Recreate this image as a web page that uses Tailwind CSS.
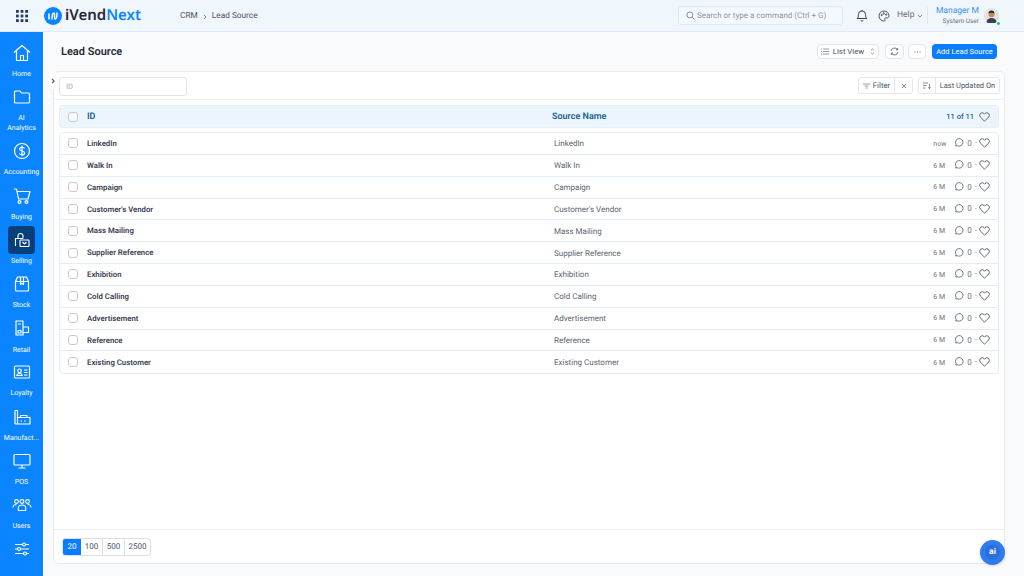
<!DOCTYPE html>
<html lang="en">
  <head>
    <meta charset="UTF-8" />
    <title>Lead Source</title>
    <script src="https://cdn.jsdelivr.net/npm/@tailwindcss/browser@4"></script>
  </head>
  <body class="w-[1024px] h-[576px] overflow-hidden bg-[#f8fafc] font-['Roboto',sans-serif] [text-rendering:geometricPrecision] text-[#4b5563]">
    <!-- top bar -->
    <header class="h-[32px] flex items-center bg-[#eff6fc] border-b border-[#dbeafe]">
      <div class="w-[678px] shrink-0 flex items-center">
        <div class="w-[43px] flex justify-center">
          <svg width="12" height="12" viewBox="0 0 13 13" fill="#1e3a5f"><rect x="0" y="0" width="3" height="3"/><rect x="5" y="0" width="3" height="3"/><rect x="10" y="0" width="3" height="3"/><rect x="0" y="5" width="3" height="3"/><rect x="5" y="5" width="3" height="3"/><rect x="10" y="5" width="3" height="3"/><rect x="0" y="10" width="3" height="3"/><rect x="5" y="10" width="3" height="3"/><rect x="10" y="10" width="3" height="3"/></svg>
        </div>
        <svg width="18" height="18" viewBox="0 0 18 18" class="ml-px"><circle cx="9" cy="9" r="9" fill="#0a84ff"/><path d="M5 7v5M8 12c0-4 1-6 2-6s0 6 1 6 2-2 2-6" fill="none" stroke="#fff" stroke-width="1.500" stroke-linecap="round"/></svg>
        <div class="ml-[3px] w-[76px] font-['Noto_Sans',sans-serif] text-[15px] font-semibold leading-none text-[#1f2937]">iVend<span class="text-[#0a84ff]">Next</span></div>
        <div class="ml-[39px] pt-[2px] flex items-center text-[8.300px] text-[#4b5563]">
          <span>CRM</span>
          <svg width="12" height="10" viewBox="0 0 12 10" fill="none" stroke="#6b7280" stroke-width="0.9" class="mx-[1px]"><path d="M5 3l2 2-2 2"/></svg>
          <span>Lead Source</span>
        </div>
      </div>
      <div class="w-[165px] h-[19px] flex items-center gap-[2px] px-[7px] rounded-[3px] bg-[#f5f9fd] border border-[#dbeafe] text-[8px] text-[#8b95a3]">
        <svg width="9" height="9" viewBox="0 0 10 10" fill="none" stroke="#6b7280" stroke-width="0.9"><circle cx="4.300" cy="4.300" r="3.300"/><path d="M6.800 6.800L9.500 9.500"/></svg>
        <span class="pt-[1px]">Search or type a command (Ctrl + G)</span>
      </div>
      <svg width="12" height="13" viewBox="0 0 12 13" fill="none" stroke="#374151" class="ml-[13px]"><path d="M1.200 9.500c1-1 1.200-2 1.200-4a3.600 3.600 0 0 1 7.200 0c0 2 .2 3 1.200 4zM4.800 11.300a1.300 1.300 0 0 0 2.400 0M6 1v.8"/></svg>
      <svg width="12" height="12" viewBox="0 0 12 12" fill="none" stroke="#4b5563" class="ml-[10px]"><path d="M6 1a5 5 0 1 0 0 10c1.200 0 1.300-.9.9-1.500-.5-.8 0-1.600.9-1.600h1.400C10.300 7.900 11 7 11 6c0-2.800-2.200-5-5-5z"/><circle cx="3.700" cy="5" r=".6" fill="#4b5563"/><circle cx="5.800" cy="3.400" r=".6" fill="#4b5563"/><circle cx="8.200" cy="4.600" r=".6" fill="#4b5563"/></svg>
      <div class="ml-[7px] flex items-center gap-[3px] text-[8.500px] text-[#6b7280]">
        <span>Help</span>
        <svg width="6" height="4" viewBox="0 0 6 4" fill="none" stroke="#6b7280" stroke-width="0.8"><path d="M1 1l2 2 2-2"/></svg>
      </div>
      <div class="ml-[4px] w-px h-[17px] bg-[#dfe7ef]"></div>
      <div class="ml-auto pt-[1px] flex flex-col items-end">
        <span class="text-[8.500px] leading-[11px] text-[#3b93f5]">Manager M</span>
        <span class="text-[6.500px] leading-[9px] text-[#6b7280]">System User</span>
      </div>
      <div class="relative ml-[5px] mr-[25px] w-[15px] h-[15px]">
        <svg width="15" height="15" viewBox="0 0 15 15"><circle cx="7.500" cy="7.500" r="7.500" fill="#e5e2dc"/><path d="M2.500 14c.5-3 2.500-4 5-4s4.500 1 5 4a7.500 7.500 0 0 1-10 0z" fill="#374151"/><circle cx="7.500" cy="6.300" r="3" fill="#b98a6c"/><path d="M4.500 5.500c0-2 1.500-3 3-3s3 1 3 3c-1-1-5-1-6 0z" fill="#2b211c"/></svg>
        <span class="absolute right-[-2px] bottom-[-3px] w-[5px] h-[5px] rounded-full bg-[#22c55e] border-[0.5px] border-white"></span>
      </div>
    </header>

    <div class="flex h-[544px]">
      <!-- side nav -->
      <nav class="w-[43px] shrink-0 bg-[#0a84ff] text-white flex flex-col items-center pt-[11px] text-[7px] leading-[10px]">
        <a class="h-[44.200px] w-full flex flex-col items-center">
          <svg class="h-[20px] w-[20px] shrink-0" viewBox="0 0 20 20" fill="none" stroke="#fff" stroke-width="1.200" stroke-linejoin="round"><path d="M2 9.500L10 2.500l8 7M4.500 8v9.500h11V8M8.500 17.500v-5h3v5"/></svg>
          <span class="mt-[6px]">Home</span>
        </a>
        <a class="h-[54.200px] w-full flex flex-col items-center">
          <svg class="h-[20px] w-[20px] shrink-0" viewBox="0 0 20 20" fill="none" stroke="#fff" stroke-width="1.200" stroke-linejoin="round"><path d="M3.500 16h13a1 1 0 0 0 1-1V7a1 1 0 0 0-1-1H9.500L8 4H3.500a1 1 0 0 0-1 1v10a1 1 0 0 0 1 1z"/></svg>
          <span class="mt-[6px] text-center">AI<br />Analytics</span>
        </a>
        <a class="h-[44.200px] w-full flex flex-col items-center">
          <svg class="h-[20px] w-[20px] shrink-0" viewBox="0 0 20 20" fill="none" stroke="#fff" stroke-width="1.200"><circle cx="10" cy="10" r="7.500"/><path d="M12.500 7.500c-.5-1-1.500-1.300-2.500-1.300-1.300 0-2.400.7-2.400 1.900 0 2.600 5 1.200 5 3.800 0 1.200-1.200 1.900-2.600 1.900-1.100 0-2.200-.5-2.600-1.400M10 4.800v10.400"/></svg>
          <span class="mt-[6px]">Accounting</span>
        </a>
        <a class="h-[44.200px] w-full flex flex-col items-center">
          <svg class="h-[20px] w-[20px] shrink-0" viewBox="0 0 20 20" fill="none" stroke="#fff" stroke-width="1.200" stroke-linejoin="round"><path d="M2 3h2.500l2 10h9.500l2-7.500H5"/><circle cx="7.500" cy="16" r="1.400"/><circle cx="14.500" cy="16" r="1.400"/></svg>
          <span class="mt-[6px]">Buying</span>
        </a>
        <a class="relative h-[44.200px] w-full flex flex-col items-center">
          <span class="absolute top-[-4px] left-[8px] w-[27px] h-[28px] rounded-[4px] bg-[#063f7a]"></span>
          <svg class="relative h-[20px] w-[20px] shrink-0" viewBox="0 0 20 20" fill="none" stroke="#fff" stroke-width="1.100" stroke-linejoin="round"><path d="M3.500 16V8.500h7.500M6 8.500V6a2.500 2.500 0 0 1 5 0v2.500"/><rect x="8" y="10" width="9" height="6.500" rx=".6"/><path d="M10.500 12l2 2 2-2"/></svg>
          <span class="relative mt-[6px]">Selling</span>
        </a>
        <a class="h-[44.200px] w-full flex flex-col items-center">
          <svg class="h-[20px] w-[20px] shrink-0" viewBox="0 0 20 20" fill="none" stroke="#fff" stroke-width="1.200" stroke-linejoin="round"><path d="M3.500 7.500L5.500 3h9l2 4.500V16a1 1 0 0 1-1 1h-11a1 1 0 0 1-1-1zM3.500 7.500h13M8.500 3v7.500L10 9.500l1.500 1V3"/></svg>
          <span class="mt-[6px]">Stock</span>
        </a>
        <a class="h-[44.200px] w-full flex flex-col items-center">
          <svg class="h-[20px] w-[20px] shrink-0" viewBox="0 0 20 20" fill="none" stroke="#fff" stroke-width="1.200" stroke-linejoin="round"><path d="M4 17V3h7v14zM11 9h5.500v5.500H11"/><path d="M6 6h3M6 12.500h3v2.500H6z" /></svg>
          <span class="mt-[7px]">Retail</span>
        </a>
        <a class="h-[44.200px] w-full flex flex-col items-center">
          <svg class="h-[20px] w-[20px] shrink-0" viewBox="0 0 20 20" fill="none" stroke="#fff" stroke-width="1.200" stroke-linejoin="round"><rect x="2.500" y="4" width="15" height="12" rx="1"/><circle cx="7.500" cy="8.800" r="1.800"/><path d="M4.800 13.500c.2-1.500 1.300-2 2.700-2s2.500.5 2.700 2zM12 8h3.500M12 10.500h3.500M12 13h3.500"/></svg>
          <span class="mt-[6px]">Loyalty</span>
        </a>
        <a class="h-[44.200px] w-full flex flex-col items-center">
          <svg class="h-[20px] w-[20px] shrink-0" viewBox="0 0 20 20" fill="none" stroke="#fff" stroke-width="1.200" stroke-linejoin="round"><path d="M3 17V3.500h2.500V17M3 17h15v-6.500H5.500M8.500 10.500V8.500h6.500v2M8.500 14h1.500M12 14h1.500"/></svg>
          <span class="mt-[6px]">Manufact...</span>
        </a>
        <a class="h-[44.200px] w-full flex flex-col items-center">
          <svg class="h-[20px] w-[20px] shrink-0" viewBox="0 0 20 20" fill="none" stroke="#fff" stroke-width="1.200" stroke-linejoin="round"><rect x="2" y="3.500" width="16" height="10.500" rx="1"/><path d="M10 14v3M6.500 17h7"/></svg>
          <span class="mt-[6px]">POS</span>
        </a>
        <a class="h-[44.200px] w-full flex flex-col items-center">
          <svg class="h-[20px] w-[20px] shrink-0" viewBox="0 0 20 20" fill="none" stroke="#fff" stroke-width="1.100" stroke-linejoin="round"><circle cx="4.500" cy="6.500" r="1.900"/><circle cx="10" cy="6.500" r="1.900"/><circle cx="15.500" cy="6.500" r="1.900"/><path d="M1 12.500c0-2 1.500-3 3.500-3M19 12.500c0-2-1.500-3-3.500-3M6.300 15.500v-2.500c0-1.700 1.700-3 3.700-3s3.700 1.300 3.700 3v2.500z"/></svg>
          <span class="mt-[6px]">Users</span>
        </a>
        <a class="w-full flex flex-col items-center">
          <svg class="h-[20px] w-[20px] shrink-0" viewBox="0 0 20 20" fill="none" stroke="#fff" stroke-width="1.200"><path d="M3 5.500h14M3 10h14M3 14.500h14"/><circle cx="12" cy="5.500" r="1.500" fill="#0a84ff"/><circle cx="7" cy="10" r="1.500" fill="#0a84ff"/><circle cx="13" cy="14.500" r="1.500" fill="#0a84ff"/></svg>
        </a>
      </nav>

      <main class="flex-1 min-w-0 pl-[10px] pr-[19px] relative">
        <!-- page head -->
        <div class="h-[39px] flex items-center pl-[8px] pr-[8px]">
          <h1 class="pt-[2px] text-[11px] font-semibold text-[#1f2937]">Lead Source</h1>
          <div class="ml-auto flex items-center text-[7.800px] text-[#4b5563]">
            <button class="h-[15px] w-[62px] flex items-center justify-center gap-[4px] rounded-[4px] bg-white border border-[#e2e5e9]">
              <svg width="8" height="7" viewBox="0 0 8 7" fill="none" stroke="#6b7280" stroke-width="0.7"><path d="M0 1h1M2 1h6M0 3.500h1M2 3.500h6M0 6h1M2 6h6"/></svg>
              <span class="pt-[1px]">List View</span>
              <svg width="5" height="7" viewBox="0 0 5 7" fill="none" stroke="#6b7280" stroke-width="0.7" class="ml-[2px]"><path d="M1 2.200l1.500-1.200L4 2.200M1 4.800L2.500 6 4 4.800"/></svg>
            </button>
            <button class="h-[15px] w-[19px] ml-[6px] flex items-center justify-center rounded-[4px] bg-white border border-[#e2e5e9]">
              <svg width="9" height="9" viewBox="0 0 9 9" fill="none" stroke="#4b5563" stroke-width="0.8"><path d="M1 3.800a3.600 3.600 0 0 1 6.400-1.300M8 5.200a3.600 3.600 0 0 1-6.400 1.300M7.700 1v1.800H5.900M1.300 8V6.200h1.800"/></svg>
            </button>
            <button class="h-[15px] w-[18px] ml-[4px] flex items-center justify-center rounded-[4px] bg-white border border-[#e2e5e9]">
              <svg width="7" height="2" viewBox="0 0 7 2" fill="#4b5563"><circle cx="1" cy="1" r=".6"/><circle cx="3.500" cy="1" r=".6"/><circle cx="6" cy="1" r=".6"/></svg>
            </button>
            <button class="h-[15px] w-[65px] ml-[6px] pt-[1px] rounded-[4px] bg-[#0a7cff] text-[7.500px] text-white">Add Lead Source</button>
          </div>
        </div>

        <!-- list card -->
        <section class="relative h-[493px] bg-white border border-[#e7eaee] rounded-[6px] flex flex-col">
          <span class="absolute left-[-4px] top-0 w-[7px] h-[17px] flex items-center justify-center bg-white rounded-[2px]">
            <svg width="5" height="6" viewBox="0 0 5 6" fill="none" stroke="#4b5563" stroke-width="1.100"><path d="M1 .8l2.200 2.200L1 5.200"/></svg>
          </span>
          <div class="h-[28px] flex items-center pl-[5px] pr-[4px] border-b border-[#eef0f3]">
            <div class="mt-[2px] w-[128px] h-[19px] flex items-center px-[6px] rounded-[3px] border border-[#e2e4e8] text-[7.500px] text-[#a3a9b2]">ID</div>
            <div class="ml-auto flex items-center text-[7.800px] text-[#4b5563]">
              <div class="flex h-[17px] rounded-[3px] border border-[#e5e7eb]">
                <span class="w-[36px] flex items-center justify-center gap-[3px] border-r border-[#e5e7eb]">
                  <svg width="7" height="6" viewBox="0 0 7 6" fill="none" stroke="#6b7280" stroke-width="0.7"><path d="M0 1h7M1.500 3h4M2.500 5h2"/></svg>
                  Filter
                </span>
                <span class="w-[17px] flex items-center justify-center">
                  <svg width="6" height="6" viewBox="0 0 6 6" fill="none" stroke="#4b5563" stroke-width="0.7"><path d="M1 1l4 4M5 1L1 5"/></svg>
                </span>
              </div>
              <div class="ml-[5px] flex h-[17px] rounded-[3px] border border-[#e5e7eb]">
                <span class="w-[17px] flex items-center justify-center border-r border-[#e5e7eb]">
                  <svg width="8" height="7" viewBox="0 0 8 7" fill="none" stroke="#4b5563" stroke-width="0.7"><path d="M0 1h5M0 3.500h3.500M0 6h2.500M6.500 2v4.500M5.200 5.300l1.300 1.300 1.300-1.300"/></svg>
                </span>
                <span class="w-[63px] flex items-center justify-center whitespace-nowrap text-[7.500px]">Last Updated On</span>
              </div>
            </div>
          </div>

          <div class="mx-[5px] mt-[5px] h-[23px] shrink-0 flex items-center rounded-[3px] bg-[#edf5fc] border border-[#e3eff9] text-[9px] font-semibold text-[#15639f]">
            <span class="ml-[8px] w-[10px] h-[10px] rounded-[3px] border-[1.500px] border-[#c6c9ce] bg-[#f8fafc]"></span>
            <span class="ml-[9px] w-[465px] pt-[2px]">ID</span>
            <span class="pt-[2px]">Source Name</span>
            <span class="ml-auto pt-[1px] text-[7.500px] font-medium">11 of 11</span>
            <svg width="11" height="10" viewBox="0 0 10 9" fill="none" stroke="#4b5563" stroke-width="0.8" class="ml-[5px] mr-[8px]"><path d="M5 8.300L1.200 4.500a2.300 2.300 0 0 1 3.300-3.200l.5.500.5-.5a2.300 2.300 0 0 1 3.300 3.200z"/></svg>
          </div>

          <div id="rows" class="mx-[5px] mt-[4px] rounded-[4px] border border-[#dfeefb] divide-y divide-[#dfeefb]"></div>

          <div class="mt-auto h-[34px] flex items-center pl-[8px] border-t border-[#eceef1]">
            <div class="flex h-[18px] rounded-[3px] border border-[#dcdfe3] text-[8px] text-[#4b5563]">
              <span class="w-[18px] flex items-center justify-center rounded-l-[2px] bg-[#0a7cff] text-white">20</span>
              <span class="w-[22px] flex items-center justify-center border-r border-[#dcdfe3]">100</span>
              <span class="w-[22px] flex items-center justify-center border-r border-[#dcdfe3]">500</span>
              <span class="w-[25px] flex items-center justify-center">2500</span>
            </div>
          </div>
          <div class="absolute right-[-1px] bottom-[-2px] w-[25px] h-[25px] rounded-full bg-[#2f7cf0] flex items-center justify-center shadow-sm">
            <span class="w-[15px] h-[15px] rounded-full bg-[#2a6fdc] flex items-center justify-center text-[8.500px] font-bold leading-none text-white">ai</span>
          </div>
        </section>
      </main>
    </div>

    <script>
      const names = ["LinkedIn", "Walk In", "Campaign", "Customer's Vendor", "Mass Mailing", "Supplier Reference", "Exhibition", "Cold Calling", "Advertisement", "Reference", "Existing Customer"];
      document.getElementById("rows").innerHTML = names.map((n, i) => `
        <div class="h-[21.850px] flex items-center text-[8px]">
          <span class="ml-[8px] w-[10px] h-[10px] rounded-[3px] border-[1.500px] border-[#c6c9ce] bg-white"></span>
          <span class="ml-[9px] w-[467px] pt-[1px] text-[7.800px] font-semibold text-[#374151]">${n}</span>
          <span class="pt-[2px] text-[#5b6470]">${n}</span>
          <span class="ml-auto w-[21px] pt-[1px] text-[7px] text-[#6b7280]">${i == 0 ? "now" : "6 M"}</span>
          <svg width="10" height="10" viewBox="0 0 9 9" fill="none" stroke="#4b5563" stroke-width="0.7"><path d="M1.500 7.200l.4-1.400A3.400 3.400 0 1 1 3.300 7z"/></svg>
          <span class="ml-[3px] pt-[1px] text-[#6b7280]">0</span>
          <span class="ml-[3px] text-[#9ca3af]">-</span>
          <svg width="11" height="10" viewBox="0 0 10 9" fill="none" stroke="#4b5563" stroke-width="0.8" class="ml-[2px] mr-[8px]"><path d="M5 8.300L1.200 4.500a2.300 2.300 0 0 1 3.300-3.200l.5.500.5-.5a2.300 2.300 0 0 1 3.300 3.200z"/></svg>
        </div>`).join("");
    </script>
  </body>
</html>
